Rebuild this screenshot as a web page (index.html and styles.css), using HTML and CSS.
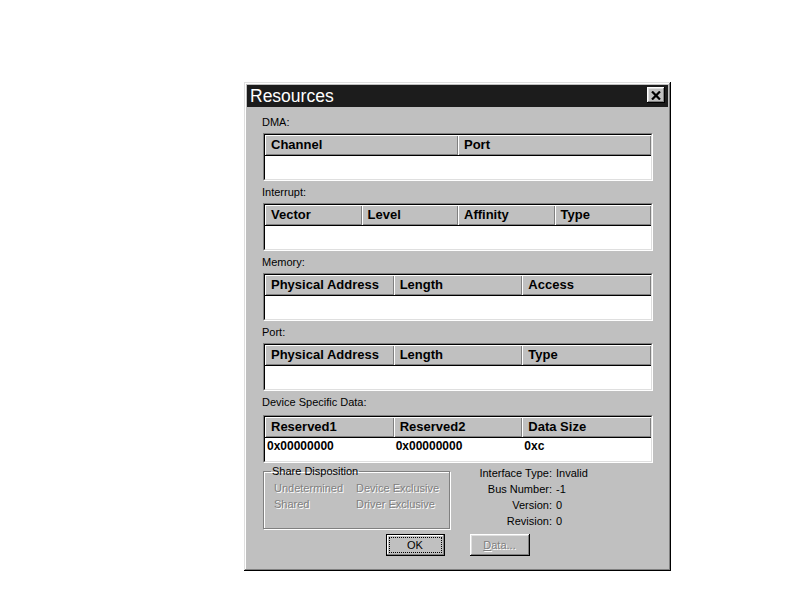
FILE: index.html
```html
<!DOCTYPE html>
<html lang="en">
<head>
    <meta charset="UTF-8">
    <title>Resources</title>
    <link rel="stylesheet" href="styles.css">
</head>
<body>
    <div class="screen">
        <div class="dialog">
            <div class="titlebar">
                <span class="title">Resources</span>
                <button class="close-btn" aria-label="Close">
                    <svg width="10" height="9" viewBox="0 0 10 9">
                        <path d="M1 0.5 L9 8.5 M9 0.5 L1 8.5" stroke="#000" stroke-width="2.2" fill="none"/>
                    </svg>
                </button>
            </div>

            <div class="content">
                <div class="section">
                    <div class="label">DMA:</div>
                    <div class="list">
                        <div class="list-inner">
                            <div class="list-head cols-2">
                                <div class="head-cell">Channel</div>
                                <div class="head-cell">Port</div>
                            </div>
                            <div class="list-body"></div>
                        </div>
                    </div>
                </div>

                <div class="section">
                    <div class="label">Interrupt:</div>
                    <div class="list">
                        <div class="list-inner">
                            <div class="list-head cols-4">
                                <div class="head-cell">Vector</div>
                                <div class="head-cell">Level</div>
                                <div class="head-cell">Affinity</div>
                                <div class="head-cell">Type</div>
                            </div>
                            <div class="list-body"></div>
                        </div>
                    </div>
                </div>

                <div class="section">
                    <div class="label">Memory:</div>
                    <div class="list">
                        <div class="list-inner">
                            <div class="list-head cols-3">
                                <div class="head-cell">Physical Address</div>
                                <div class="head-cell">Length</div>
                                <div class="head-cell">Access</div>
                            </div>
                            <div class="list-body"></div>
                        </div>
                    </div>
                </div>

                <div class="section">
                    <div class="label">Port:</div>
                    <div class="list">
                        <div class="list-inner">
                            <div class="list-head cols-3">
                                <div class="head-cell">Physical Address</div>
                                <div class="head-cell">Length</div>
                                <div class="head-cell">Type</div>
                            </div>
                            <div class="list-body"></div>
                        </div>
                    </div>
                </div>

                <div class="section device">
                    <div class="label">Device Specific Data:</div>
                    <div class="list">
                        <div class="list-inner">
                            <div class="list-head cols-3">
                                <div class="head-cell">Reserved1</div>
                                <div class="head-cell">Reserved2</div>
                                <div class="head-cell">Data Size</div>
                            </div>
                            <div class="list-body">
                                <div class="data-row cols-3">
                                    <div class="data-cell">0x00000000</div>
                                    <div class="data-cell">0x00000000</div>
                                    <div class="data-cell">0xc</div>
                                </div>
                            </div>
                        </div>
                    </div>
                </div>

                <div class="bottom">
                    <fieldset class="group">
                        <legend>Share Disposition</legend>
                        <div class="options">
                            <span class="disabled">Undetermined</span>
                            <span class="disabled">Device Exclusive</span>
                            <span class="disabled">Shared</span>
                            <span class="disabled">Driver Exclusive</span>
                        </div>
                    </fieldset>

                    <div class="info">
                        <span class="info-key">Interface Type:</span><span>Invalid</span>
                        <span class="info-key">Bus Number:</span><span>-1</span>
                        <span class="info-key">Version:</span><span>0</span>
                        <span class="info-key">Revision:</span><span>0</span>
                    </div>
                </div>

                <div class="buttons">
                    <button class="btn default"><span class="focus">OK</span></button>
                    <button class="btn" disabled><span class="disabled"><u>D</u>ata...</span></button>
                </div>
            </div>
        </div>
    </div>
</body>
</html>
```

FILE: styles.css
```css
body {
    margin: 0;
    background: #fff;
    font-family: "Liberation Sans", Arial, sans-serif;
    font-size: 11px;
    color: #000;
}
.screen {
    padding: 82px 0 0 244px;
}
.dialog {
    width: 427px;
    height: 489px;
    box-sizing: border-box;
    padding: 3px;
    background: #c0c0c0;
    box-shadow: inset -1px -1px #000, inset 1px 1px #dfdfdf, inset -2px -2px #808080, inset 2px 2px #fff;
}
.titlebar {
    height: 22px;
    background: #1c1c1c;
    display: flex;
    align-items: center;
    justify-content: space-between;
    padding: 0 3px;
}
.title {
    color: #fff;
    font-size: 17.5px;
    line-height: 22px;
}
.close-btn {
    width: 18px;
    height: 16px;
    padding: 0;
    margin-top: -2px;
    border: none;
    background: #c0c0c0;
    box-shadow: inset -1px -1px #000, inset 1px 1px #fff, inset -2px -2px #808080, inset 2px 2px #dfdfdf;
    display: flex;
    align-items: center;
    justify-content: center;
}
.content {
    padding: 9px 15px 0 15px;
}
.section {
    margin-bottom: 5px;
}
.section.device {
    margin-top: 1px;
}
.section.device .label {
    margin-bottom: 6px;
}
.label {
    line-height: 13px;
    margin-bottom: 4px;
}
.list {
    height: 48px;
    box-sizing: border-box;
    margin-left: 1px;
    border: 1px solid;
    border-color: #808080 #fff #fff #808080;
}
.list-inner {
    height: 100%;
    box-sizing: border-box;
    border: 1px solid;
    border-color: #000 #dfdfdf #dfdfdf #000;
    background: #fff;
}
.list-head {
    display: grid;
    border-bottom: 1px solid #000;
}
.cols-2 {
    display: grid;
    grid-template-columns: repeat(2, 1fr);
}
.cols-3 {
    display: grid;
    grid-template-columns: repeat(3, 1fr);
}
.cols-4 {
    display: grid;
    grid-template-columns: repeat(4, 1fr);
}
.head-cell {
    height: 20px;
    line-height: 20px;
    padding-left: 6px;
    background: #c0c0c0;
    box-shadow: inset 1px 1px #fff, inset -1px -1px #808080;
    font-size: 13px;
    font-weight: bold;
    white-space: nowrap;
    overflow: hidden;
}
.data-cell {
    padding-left: 2px;
    font-size: 12px;
    font-weight: bold;
    line-height: 16px;
}
.bottom {
    display: flex;
    margin-top: -3px;
}
.group {
    width: 187px;
    box-sizing: border-box;
    margin: 0 0 0 1px;
    padding: 0 0 5px 7px;
    border: 1px solid #808080;
    box-shadow: inset 1px 1px #fff, 1px 1px #fff;
}
.group legend {
    padding: 0 1px;
    line-height: 13px;
}
.options {
    display: grid;
    grid-template-columns: 82px auto;
    padding: 2px 0 0 3px;
    line-height: 16px;
}
.disabled {
    color: #808080;
    text-shadow: 1px 1px 0 #fff;
}
.info {
    display: grid;
    grid-template-columns: 102px auto;
    column-gap: 4px;
    align-content: start;
    line-height: 16px;
}
.info-key {
    text-align: right;
}
.buttons {
    display: flex;
    justify-content: center;
    gap: 25px;
    margin-top: 5px;
}
.btn {
    width: 60px;
    height: 22px;
    padding: 0;
    border: none;
    background: #c0c0c0;
    font-family: "Liberation Sans", Arial, sans-serif;
    font-size: 11px;
    color: #000;
    box-shadow: inset -1px -1px #000, inset 1px 1px #fff, inset -2px -2px #808080, inset 2px 2px #dfdfdf;
    display: flex;
    align-items: center;
    justify-content: center;
}
.btn.default {
    width: 59px;
    border: 1px solid #000;
    box-shadow: inset -1px -1px #808080, inset 1px 1px #fff;
}
.focus {
    display: flex;
    align-items: center;
    justify-content: center;
    width: 51px;
    height: 14px;
    border: 1px dotted #000;
}
```
